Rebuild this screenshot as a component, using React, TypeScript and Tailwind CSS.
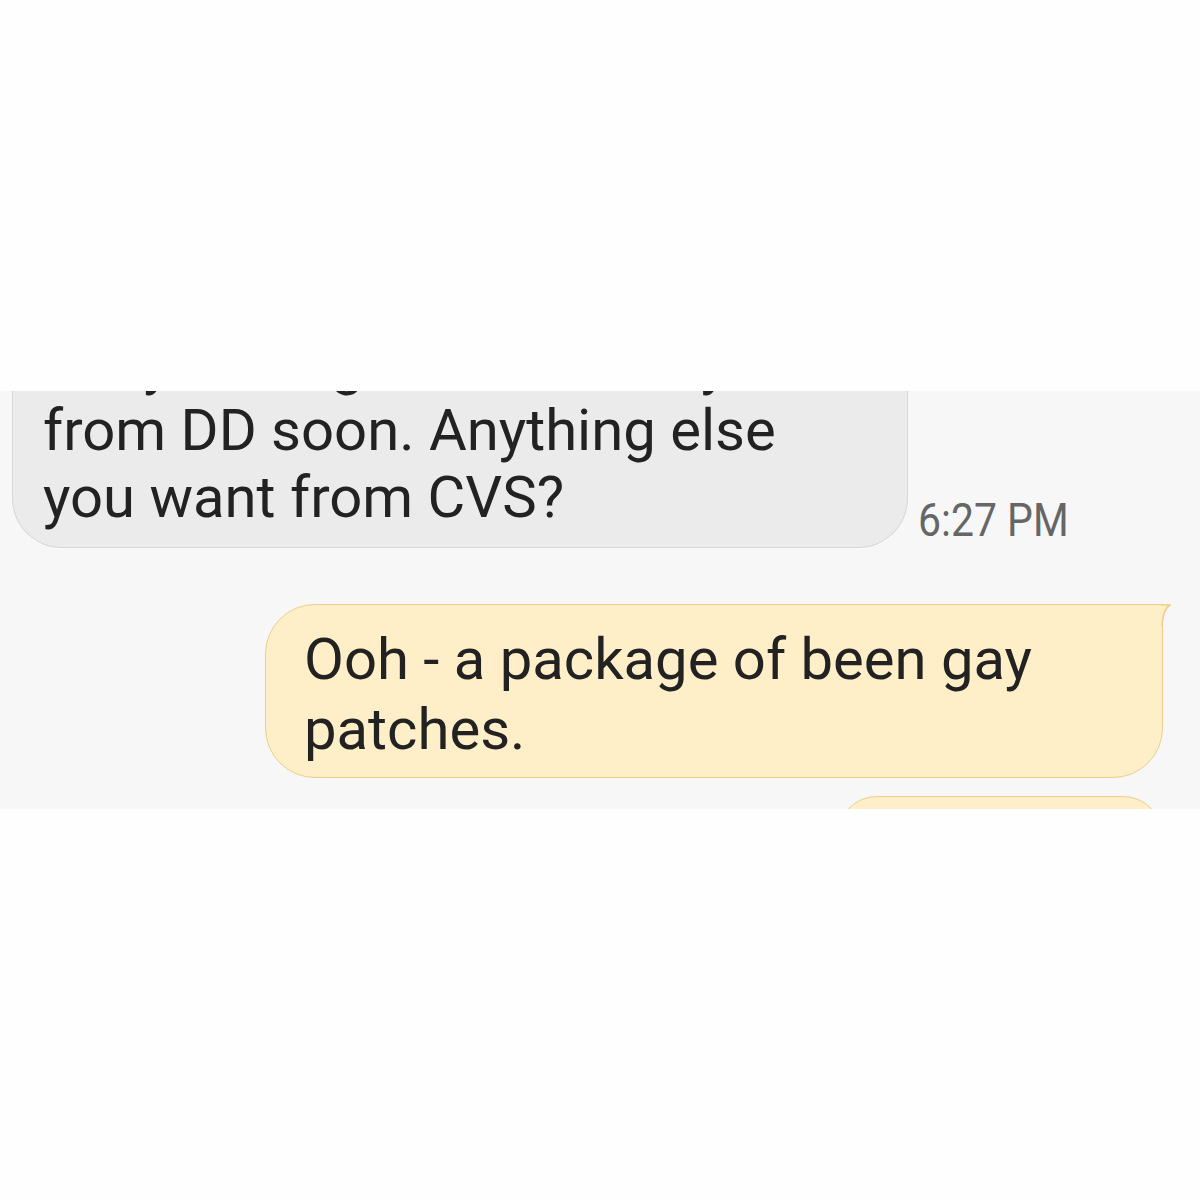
const FONT = { fontFamily: "Roboto, 'Noto Sans', sans-serif" };

const Tail = () => (
  <svg
    className="absolute -right-[9px] -top-px"
    width="10"
    height="22"
    viewBox="0 0 10 22"
  >
    <path d="M0 1 L9 1 Q2 5 1 22 L0 22 Z" fill="#feefc9" />
    <path d="M0 1 L9 1 Q2 5 1 22" fill="none" stroke="#ebcf8b" strokeWidth="1.5" />
  </svg>
);

export default function App() {
  return (
    <div className="min-h-[1200px] w-full bg-[#fefefe]" style={FONT}>
      <div className="h-[391px]" />
      <section className="flex h-[418px] flex-col overflow-hidden bg-[#f7f7f7]">
        <div className="flex items-end gap-[10px] pl-[12px]">
          <div className="-mt-[61px] w-[896px] rounded-b-[50px] border border-t-0 border-[#d7d7d7] bg-[#ebebeb] pb-[16px] pl-[30px] text-[58px] leading-[67px] text-[#222222]">
            <div className="whitespace-nowrap">Okay so I'll grab 2 donuts you</div>
            <div>from DD soon. Anything else</div>
            <div>you want from CVS?</div>
          </div>
          <span className="mb-[5px] origin-left scale-x-[0.89] whitespace-nowrap text-[46px] leading-none text-[#666666]">
            6:27 PM
          </span>
        </div>

        <div className="mt-[56px] flex justify-end pr-[37px]">
          <div className="relative w-[898px] rounded-[50px] rounded-tr-none border-[1.5px] border-[#ebcf8b] bg-[#feefc9] pb-[13px] pl-[38px] pt-[19px] text-[58px] leading-[70px] text-[#222222]">
            <Tail />
            Ooh - a package of been gay
            <br />
            patches.
          </div>
        </div>

        <div className="mt-[18px] flex justify-end pr-[37px]">
          <div className="h-[80px] w-[326px] rounded-[40px] border-[1.5px] border-[#ebcf8b] bg-[#feefc9]" />
        </div>
      </section>
    </div>
  );
}
